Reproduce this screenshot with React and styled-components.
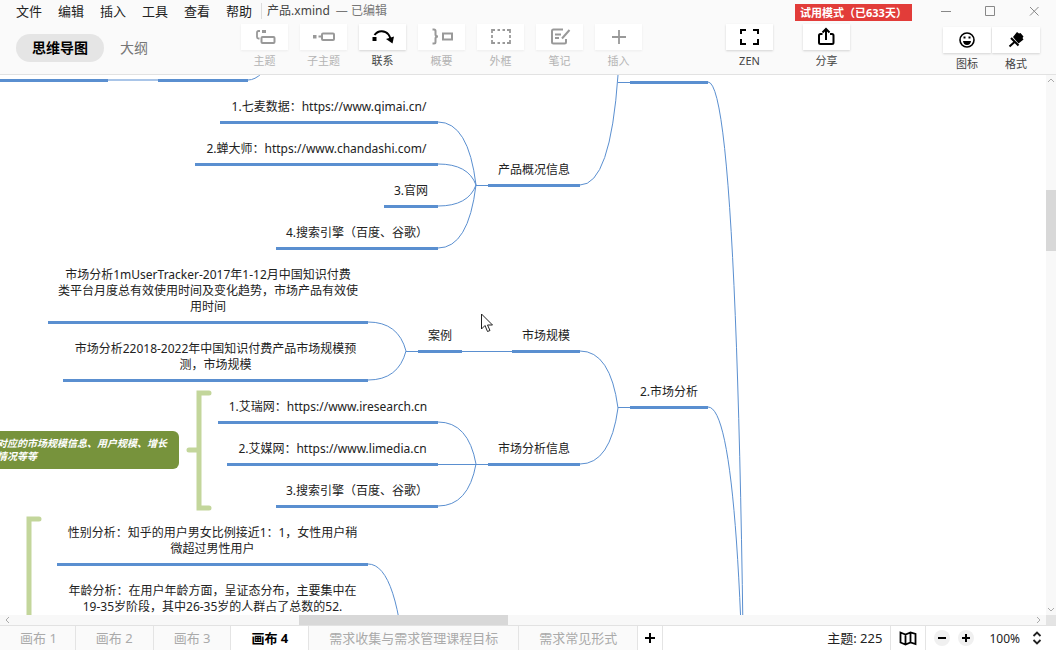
import React from 'react'
import styled, { createGlobalStyle } from 'styled-components'

const GlobalStyle = createGlobalStyle`
  * {
    box-sizing: border-box;
  }
  body {
    margin: 0;
    background: #fff;
    font-family: 'Noto Sans', 'Noto Sans CJK SC', sans-serif;
    color: #222;
  }
  button {
    font-family: inherit;
    border: none;
    background: none;
    padding: 0;
    margin: 0;
    cursor: pointer;
  }
`
const Page = styled.div`
  display: flex;
  flex-direction: column;
  height: 100vh;
  overflow: hidden;
`
const Header = styled.header`
  flex-shrink: 0;
  background: #fafafa;
  border-bottom: 1px solid #e2e2e2;
`
const TitleBar = styled.div`
  display: flex;
  align-items: center;
  height: 22px;
  padding: 0 16px;
`
const MenuList = styled.nav`
  display: flex;
  gap: 16px;
`
const MenuItem = styled.button`
  font-size: 13px;
  line-height: 20px;
  color: #222;
`
const FileName = styled.span`
  margin-left: 9px;
  padding-left: 5px;
  border-left: 1px solid #ddd;
  font-size: 12px;
  line-height: 16px;
  color: #444;
`
const Edited = styled.span`
  margin-left: 6px;
  font-size: 12px;
  line-height: 16px;
  color: #777;
`
const TrialBadge = styled.span`
  margin-left: auto;
  margin-top: 3px;
  width: 117px;
  padding-left: 5px;
  background: #e23c39;
  color: #fff;
  font-size: 11px;
  font-weight: 700;
  line-height: 17px;
  white-space: nowrap;
`
const WindowButtons = styled.div`
  display: flex;
  gap: 32px;
  margin-left: 28px;
`
const WindowButton = styled.button`
  display: flex;
  width: 12px;
  height: 12px;
  color: #888;
`
const ToolBar = styled.div`
  display: flex;
  align-items: flex-start;
  height: 52px;
  padding: 2px 16px 0;
`
const ViewTabs = styled.div`
  display: flex;
  width: 225px;
  flex-shrink: 0;
  padding-top: 10px;
`
const ViewTab = styled.button`
  height: 28px;
  padding: 0 16px;
  border-radius: 14px;
  font-size: 14px;
  line-height: 28px;
  background: ${(props) => (props.$active ? '#e5e5e5' : 'transparent')};
  color: ${(props) => (props.$active ? '#000' : '#777')};
  font-weight: ${(props) => (props.$active ? 700 : 400)};
`
const ToolGroup = styled.div`
  display: flex;
  gap: ${(props) => props.$gap}px;
  margin-left: ${(props) => props.$left || 0};
  padding-top: ${(props) => props.$top || 0}px;
`
const ToolButton = styled.button`
  display: flex;
  flex-direction: column;
  align-items: center;
  width: ${(props) => props.$width || 47}px;
  color: ${(props) => (props.$muted ? '#999' : '#000')};
`
const ToolTile = styled.span`
  display: flex;
  align-items: center;
  justify-content: center;
  width: 100%;
  height: 26px;
  background: #fff;
  box-shadow: 0 1px 2px ${(props) => (props.$muted ? '#ededed' : '#d4d4d4')};
`
const ToolLabel = styled.span`
  margin-top: 3px;
  font-size: 11px;
  line-height: 16px;
  color: ${(props) => (props.$muted ? '#b4b4b4' : '#444')};
`
const Workspace = styled.div`
  flex: 1;
  min-height: 0;
  display: grid;
  grid-template-columns: 1fr 10px;
  grid-template-rows: 1fr 10px;
`
const Canvas = styled.main`
  position: relative;
  overflow: hidden;
  background: #fff;
`
const Lines = styled.svg`
  position: absolute;
  left: 0;
  top: 0;
  width: 100%;
  height: 100%;
`
const Topic = styled.div`
  position: absolute;
  left: ${(props) => props.$x}px;
  top: ${(props) => props.$y}px;
  width: ${(props) => props.$w}px;
  padding: 0 10px 6px;
  border-bottom: 3px solid #5a8fd0;
  font-size: 12px;
  line-height: 16px;
  text-align: ${(props) => props.$align || 'center'};
  white-space: pre;
`
const SummaryTopic = styled.div`
  position: absolute;
  left: -15px;
  top: 356px;
  width: 194px;
  padding: 6px 12px;
  border-radius: 6px;
  background: #77933c;
  color: #fff;
  font-size: 10px;
  font-style: italic;
  font-weight: 700;
  line-height: 13px;
  white-space: pre;
`
const Pointer = styled.svg`
  position: absolute;
  left: 481px;
  top: 238px;
`
const VerticalScroll = styled.div`
  display: flex;
  flex-direction: column;
  align-items: center;
  background: #f8f8f8;
  color: #aaa;
`
const HorizontalScroll = styled.div`
  display: flex;
  align-items: center;
  background: #f8f8f8;
  color: #aaa;
`
const Thumb = styled.div`
  background: #d8d8d8;
  ${(props) =>
    props.$vertical
      ? 'width: 100%; height: 61px; margin-top: 105px; margin-bottom: auto;'
      : 'height: 100%; width: 20%; margin-left: 289px; margin-right: auto;'}
`
const ScrollCorner = styled.div`
  background: #e4e4e4;
`
const Footer = styled.footer`
  display: flex;
  flex-shrink: 0;
  height: 25px;
  border-top: 1px solid #e2e2e2;
  background: #fff;
`
const SheetTab = styled.button`
  padding: 0 20px;
  border-right: 1px solid #e4e4e4;
  font-size: 13px;
  line-height: 24px;
  white-space: nowrap;
  background: ${(props) => (props.$active ? '#fff' : '#fafafa')};
  color: ${(props) => (props.$active ? '#000' : '#aaa')};
  font-weight: ${(props) => (props.$active ? 700 : 400)};

  &:first-child {
    padding-right: 18px;
  }
`
const AddSheet = styled.button`
  display: flex;
  align-items: center;
  justify-content: center;
  width: 25px;
  border-right: 1px solid #e4e4e4;
`
const Status = styled.div`
  display: flex;
  align-items: center;
  margin-left: auto;
  padding-right: 14px;
  font-size: 12px;
`
const TopicCount = styled.span`
  padding-right: 8px;
  font-size: 13px;
  line-height: 24px;
`
const MapButton = styled.button`
  display: flex;
  align-items: center;
  justify-content: center;
  width: 36px;
  height: 24px;
  border: solid #e4e4e4;
  border-width: 0 1px;
`
const ZoomControls = styled.div`
  display: flex;
  gap: 8px;
  margin: 0 15px 0 8px;
`
const RoundButton = styled.button`
  display: flex;
  align-items: center;
  justify-content: center;
  width: 16px;
  height: 16px;
  border-radius: 8px;
  background: #f0f0f0;
`
const ZoomLevel = styled.button`
  display: flex;
  align-items: center;
  gap: 12px;
  font-size: 12px;
  color: #222;
`

const Icon = ({ children, width = 24, height = 20 }) => (
  <svg
    width={width}
    height={height}
    viewBox={`0 0 ${width} ${height}`}
    fill='none'
    stroke='currentColor'
    strokeWidth='2'
    aria-hidden='true'
  >
    {children}
  </svg>
)

const tools = [
  {
    label: '主题',
    muted: true,
    icon: (
      <>
        <path d='M7 4H5.500Q4 4 4 5.500V10Q4 11.500 5.500 11.500H6.500' strokeWidth='1.800' />
        <path d='M9 3h4v3H9z' fill='currentColor' stroke='none' />
        <rect x='8.500' y='10' width='13' height='6' rx='1' />
      </>
    ),
  },
  {
    label: '子主题',
    muted: true,
    icon: (
      <>
        <path d='M1 8h3.500v3.500H1z' fill='currentColor' stroke='none' />
        <path d='M6.500 9.500h3.500' />
        <rect x='10' y='6.500' width='12' height='6.500' rx='1' />
      </>
    ),
  },
  {
    label: '联系',
    icon: (
      <>
        <path d='M1.500 10h4v4h-4z' fill='currentColor' stroke='none' />
        <path d='M3.500 8C7 3 14 3 17.500 7.500Q19 9.500 19.500 12' />
        <path d='M23 9.500 21.500 16.500 15 12z' fill='currentColor' stroke='none' />
      </>
    ),
  },
  {
    label: '概要',
    muted: true,
    icon: (
      <>
        <path d='M2.500 2.500H4Q5.500 2.500 5.500 4V7.500Q5.500 9.500 8 9.500Q5.500 9.500 5.500 11.500V15Q5.500 16.500 4 16.500H2.500' />
        <rect x='13' y='6.500' width='9' height='6' />
      </>
    ),
  },
  {
    label: '外框',
    muted: true,
    icon: (
      <path
        d='M3 6V3H6M8.500 3H11M13.500 3H16M18 3H21V6M21 8V11M21 13V16H18M16 16H13.500M11 16H8.500M6 16H3V13M3 11V8'
        strokeWidth='1.800'
      />
    ),
  },
  {
    label: '笔记',
    muted: true,
    icon: (
      <>
        <path d='M15 2.500H5.500Q4 2.500 4 4V15Q4 16.500 5.500 16.500H16.500Q18 16.500 18 15V12' />
        <path d='M7 7.500h6M7 11h4M21.500 3 14 11.500' />
      </>
    ),
  },
  {
    label: '插入',
    muted: true,
    icon: <path d='M12 3v14M5 10h14' strokeWidth='1.800' />,
  },
]

const viewTools = [
  {
    label: 'ZEN',
    icon: <path d='M3 7V3H8M15 3H20V7M20 12V17H15M8 17H3V12' />,
  },
  {
    label: '分享',
    icon: (
      <>
        <path d='M7.500 7H5.500Q4 7 4 8.500V15.500Q4 17 5.500 17H17Q18.500 17 18.500 15.500V8.500Q18.500 7 17 7H15' />
        <path d='M11 13V2M7.500 5.500 11 2 14.500 5.500' />
      </>
    ),
  },
]

const panelTools = [
  {
    label: '图标',
    icon: (
      <>
        <circle cx='12' cy='10' r='7' strokeWidth='1.600' />
        <path d='M8 11h8Q15.500 15 12 15T8 11zM8.500 6.500h2v2h-2zM13.500 6.500h2v2h-2z' fill='currentColor' stroke='none' />
      </>
    ),
  },
  {
    label: '格式',
    icon: (
      <>
        <path d='M13 2 15 3.500 16.500 3 19.500 6.500 18.500 8 19.500 9.500 14.500 13.500 9 7z' fill='currentColor' stroke='none' />
        <path d='M7 8 14.500 15.500M10.500 12 5.500 16.500' />
      </>
    ),
  },
]

const topics = [
  { x: 0, y: -18, w: 108, text: ' ' },
  { x: 158, y: -18, w: 90, text: ' ' },
  { x: 630, y: -16, w: 78, text: ' ' },
  { x: 220, y: 24, w: 218, text: '1.七麦数据：https://www.qimai.cn/' },
  { x: 195, y: 66, w: 243, text: '2.蝉大师：https://www.chandashi.com/' },
  { x: 384, y: 108, w: 54, text: '3.官网' },
  { x: 276, y: 150, w: 162, text: '4.搜索引擎（百度、谷歌）', align: 'left' },
  { x: 488, y: 87, w: 92, text: '产品概况信息' },
  {
    x: 48,
    y: 192,
    w: 320,
    text: '市场分析1mUserTracker-2017年1-12月中国知识付费\n类平台月度总有效使用时间及变化趋势，市场产品有效使\n用时间',
  },
  { x: 63, y: 266, w: 305, text: '市场分析22018-2022年中国知识付费产品市场规模预\n测，市场规模' },
  { x: 418, y: 253, w: 44, text: '案例' },
  { x: 512, y: 253, w: 68, text: '市场规模' },
  { x: 218, y: 324, w: 220, text: '1.艾瑞网：https://www.iresearch.cn' },
  { x: 227, y: 366, w: 211, text: '2.艾媒网：https://www.limedia.cn' },
  { x: 276, y: 408, w: 162, text: '3.搜索引擎（百度、谷歌）', align: 'left' },
  { x: 488, y: 366, w: 92, text: '市场分析信息' },
  { x: 630, y: 309, w: 78, text: '2.市场分析' },
  { x: 57, y: 450, w: 311, text: '性别分析：知乎的用户男女比例接近1：1，女性用户稍\n微超过男性用户' },
  { x: 57, y: 508, w: 311, text: '年龄分析：在用户年龄方面，呈证态分布，主要集中在\n19-35岁阶段，其中26-35岁的人群占了总数的52.' },
]

// [x1, y1, x2, y2] from the end of a topic to its parent's joint
const branches = [
  [438, 47, 476, 110],
  [438, 89, 476, 110],
  [438, 131, 476, 110],
  [438, 173, 476, 110],
  [580, 110, 618, 0],
  [368, 247, 406, 276],
  [368, 305, 406, 276],
  [580, 276, 618, 333],
  [580, 389, 618, 333],
  [438, 347, 476, 389],
  [438, 431, 476, 389],
  [368, 489, 406, 606],
]

const branchPath = ([x1, y1, x2, y2]) => `M${x1} ${y1}Q${x1 + (x2 - x1) * 0.8} ${y1} ${x2} ${y2}`

const Tool = ({ tool, width }) => (
  <ToolButton $muted={tool.muted} $width={width}>
    <ToolTile $muted={tool.muted}>
      <Icon>{tool.icon}</Icon>
    </ToolTile>
    <ToolLabel $muted={tool.muted}>{tool.label}</ToolLabel>
  </ToolButton>
)

const MindMap = () => (
  <Canvas>
    <Lines fill='none' stroke='#5a8fd0'>
      {branches.map((b) => (
        <path key={b.join()} d={branchPath(b)} />
      ))}
      <path d='M108 5H158' stroke='#a9c5e8' strokeWidth='2' />
      <path d='M248 5Q255 5 262 -2' />
      <path d='M476 110.500H488M406 276.500H418M462 276.500H512M438 389.500H488M618 332.500H630M618 7.500H630' />
      <path d='M708 7Q746 7 746 1070M708 332Q746 332 746 872' />
      <g stroke='#c3d69b' strokeWidth='5' strokeLinecap='round'>
        <path d='M209 318H199V433H209M189 375H199' />
        <path d='M39 444H29V560' />
      </g>
    </Lines>
    {topics.map((t) => (
      <Topic key={`${t.x}-${t.y}`} $x={t.x} $y={t.y} $w={t.w} $align={t.align}>
        {t.text}
      </Topic>
    ))}
    <SummaryTopic>{'对应的市场规模信息、用户规模、增长\n情况等等'}</SummaryTopic>
    <Pointer width='13' height='20' viewBox='0 0 13 20' fill='#fff' stroke='#222'>
      <path d='M.5 1V16L4 12.500 6.500 18.500 9 17.500 6.500 12H11.500z' />
    </Pointer>
  </Canvas>
)

const App = () => {
  return (
    <Page>
      <GlobalStyle />
      <Header>
        <TitleBar>
          <MenuList>
            {['文件', '编辑', '插入', '工具', '查看', '帮助'].map((item) => (
              <MenuItem key={item}>{item}</MenuItem>
            ))}
          </MenuList>
          <FileName>产品.xmind</FileName>
          <Edited>— 已编辑</Edited>
          <TrialBadge>试用模式（已633天）</TrialBadge>
          <WindowButtons>
            <WindowButton aria-label='最小化'>
              <Icon width={12} height={12}>
                <path d='M1 6.500H11' strokeWidth='1' />
              </Icon>
            </WindowButton>
            <WindowButton aria-label='最大化'>
              <Icon width={12} height={12}>
                <path d='M1.500 1.500h9v9h-9z' strokeWidth='1' />
              </Icon>
            </WindowButton>
            <WindowButton aria-label='关闭'>
              <Icon width={12} height={12}>
                <path d='M2 2 10.500 10.500M10.500 2 2 10.500' strokeWidth='1' />
              </Icon>
            </WindowButton>
          </WindowButtons>
        </TitleBar>
        <ToolBar>
          <ViewTabs>
            <ViewTab $active>思维导图</ViewTab>
            <ViewTab>大纲</ViewTab>
          </ViewTabs>
          <ToolGroup $gap={12}>
            {tools.map((tool) => (
              <Tool key={tool.label} tool={tool} />
            ))}
          </ToolGroup>
          <ToolGroup $gap={30} $left='84px'>
            {viewTools.map((tool) => (
              <Tool key={tool.label} tool={tool} />
            ))}
          </ToolGroup>
          <ToolGroup $gap={1} $left='auto' $top={3}>
            {panelTools.map((tool) => (
              <Tool key={tool.label} tool={tool} width={48} />
            ))}
          </ToolGroup>
        </ToolBar>
      </Header>
      <Workspace>
        <MindMap />
        <VerticalScroll>
          <Icon width={10} height={10}>
            <path d='M2 7 5 4 8 7' strokeWidth='1' />
          </Icon>
          <Thumb $vertical />
          <Icon width={10} height={10}>
            <path d='M2 3 5 6 8 3' strokeWidth='1' />
          </Icon>
        </VerticalScroll>
        <HorizontalScroll>
          <Icon width={10} height={10}>
            <path d='M9 2 6 5 9 8' strokeWidth='1' />
          </Icon>
          <Thumb />
          <Icon width={14} height={10}>
            <path d='M5 2 8 5 5 8' strokeWidth='1' />
          </Icon>
        </HorizontalScroll>
        <ScrollCorner />
      </Workspace>
      <Footer>
        <SheetTab>画布 1</SheetTab>
        <SheetTab>画布 2</SheetTab>
        <SheetTab>画布 3</SheetTab>
        <SheetTab $active>画布 4</SheetTab>
        <SheetTab>需求收集与需求管理课程目标</SheetTab>
        <SheetTab>需求常见形式</SheetTab>
        <AddSheet aria-label='添加画布'>
          <Icon width={12} height={12}>
            <path d='M6 1V11M1 6H11' />
          </Icon>
        </AddSheet>
        <Status>
          <TopicCount>主题: 225</TopicCount>
          <MapButton aria-label='导航图'>
            <Icon width={18} height={16}>
              <path d='M1.500 2.500 6.500 4.500 11.500 2.500 16.500 4V14L11.500 12.500 6.500 14.500 1.500 12.500zM6.500 4.500V14M11.500 2.500V12.500' strokeWidth='1.800' />
            </Icon>
          </MapButton>
          <ZoomControls>
            <RoundButton aria-label='缩小'>
              <Icon width={10} height={10}>
                <path d='M1 5H9' />
              </Icon>
            </RoundButton>
            <RoundButton aria-label='放大'>
              <Icon width={10} height={10}>
                <path d='M1 5H9M5 1V9' />
              </Icon>
            </RoundButton>
          </ZoomControls>
          <ZoomLevel>
            100%
            <Icon width={10} height={16}>
              <path d='M1.500 6 5 2.500 8.500 6M1.500 10 5 13.500 8.500 10' strokeWidth='1.800' />
            </Icon>
          </ZoomLevel>
        </Status>
      </Footer>
    </Page>
  )
}

export default App
